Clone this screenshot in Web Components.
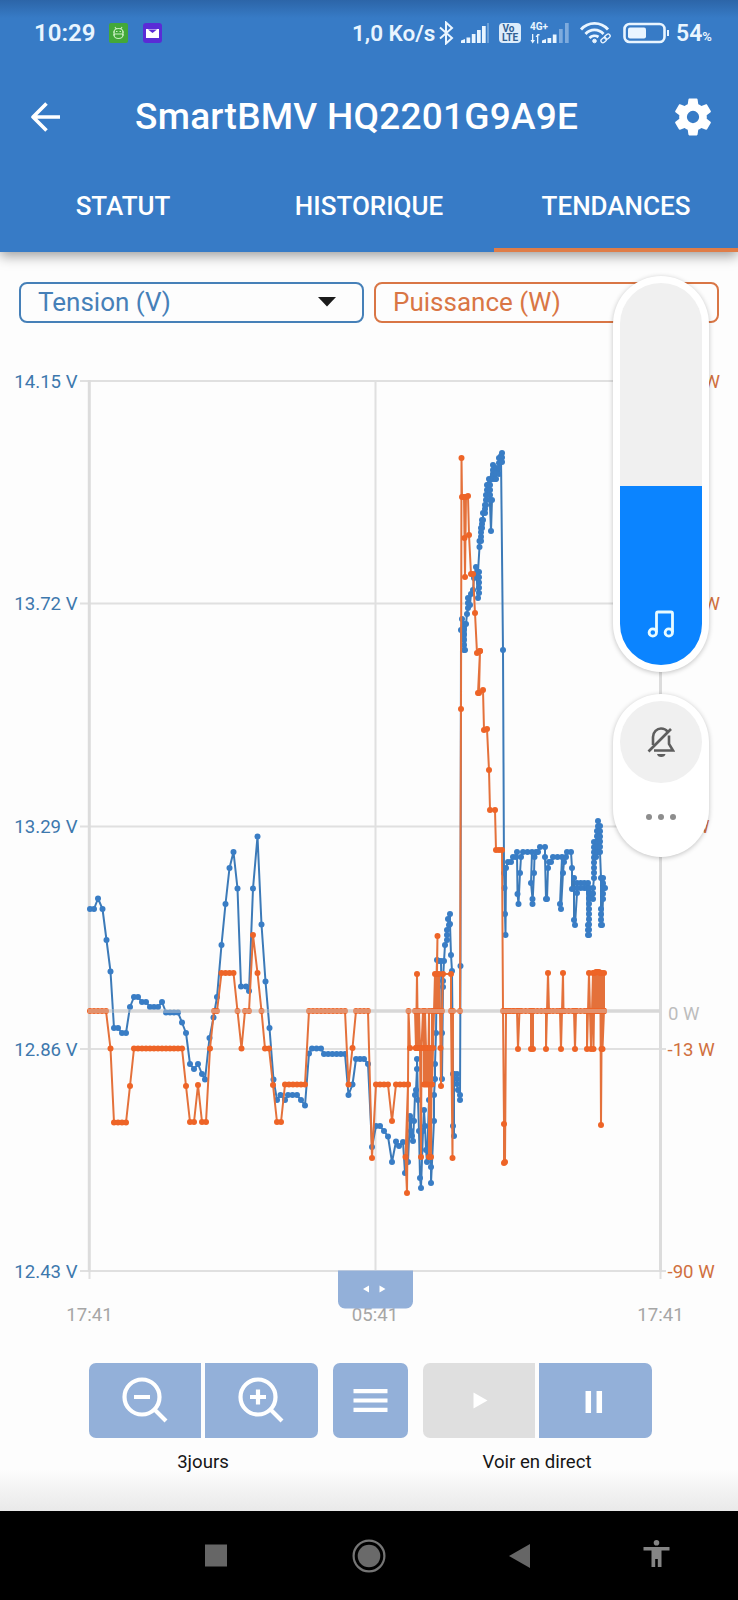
<!DOCTYPE html>
<html lang="fr">
<head>
<meta charset="utf-8">
<title>SmartBMV HQ2201G9A9E</title>
<style>
body {
    margin: 0;
    width: 738px;
    height: 1600px;
    overflow: hidden;
    background: #fdfdfd;
    font-family: Roboto, "Noto Sans", sans-serif;
}
</style>
</head>
<body>
<trends-app></trends-app>

<script>
class StatusBar extends HTMLElement {
    connectedCallback() {
        this.attachShadow({mode: 'open'}).innerHTML = `
        <style>
        :host {
            display: flex;
            align-items: center;
            height: 66px;
            padding: 0 26px 0 34px;
            color: #e9f5ff;
            font-size: 23px;
            font-weight: 500;
        }
        span { white-space: nowrap; }
        svg { display: block; flex: none; }
        .time { width: 75px; font-weight: 600; font-size: 24px; }
        .apps { display: flex; gap: 15px; }
        .right { display: flex; align-items: center; margin-left: auto; }
        .rate { width: 86px; font-size: 22.5px; font-weight: 600; }
        .level { width: 36px; margin-left: 6px; font-weight: 600; }
        small { font-size: 13px; }
        </style>
        <span class="time">10:29</span>
        <div class="apps">
            <svg width="19" height="20" viewBox="0 0 19 20"><rect width="19" height="20" rx="2" fill="#43a838"/><g fill="none" stroke="#c9efc0" stroke-width="1.100"><path d="M5 9a4.500 3.500 0 0 1 9 0v3a4.500 3.500 0 0 1-9 0zM4 9h2M13 9h2M4 12h2M13 12h2M5 11h9M6 4l1.200 2M13 4l-1.200 2"/><path d="M7 8.500h1.500M10.500 8.500H12"/></g></svg>
            <svg width="19" height="20" viewBox="0 0 19 20"><rect width="19" height="20" rx="3" fill="#5a2bd6"/><path d="M3 6h13v9H3z" fill="#fff"/><path d="M5 6.500h9L9.500 10z" fill="#5a2bd6"/></svg>
        </div>
        <div class="right">
            <span class="rate">1,0 Ko/s</span>
            <svg width="16" height="24" viewBox="0 0 16 24" fill="none" stroke="#e9f5ff" stroke-width="2"><path d="M2 6.500l12 10.500-6 5.500V1.500l6 5.500L2 17.500"/></svg>
            <svg width="28" height="22" viewBox="0 0 28 22" style="margin-left:7px" fill="#e9f5ff"><path d="M0 21v-2.500l4-1.500v4zM5.500 15.500h3.700V21H5.500zM10.800 12h3.700v9h-3.700zM16 8h3.700v13H16zM21 4h3.700v17H21z"/><path d="M26 1h2v20h-2z" opacity=".3"/></svg>
            <svg width="22" height="22" viewBox="0 0 22 22" style="margin-left:10px"><rect y="1" width="22" height="20" rx="4" fill="#dcecfb"/><g fill="#2f5f93" font-family="Roboto" font-weight="700" font-size="10"><text x="3.500" y="9.500">Vo</text><text x="3" y="19">LTE</text></g></svg>
            <svg width="40" height="24" viewBox="0 0 40 24" style="margin-left:9px" fill="#e9f5ff"><text y="9" font-family="Roboto" font-weight="700" font-size="10">4G+</text><path d="M2 13h1.300v6H5l-2.300 3.500L.5 19H2zM7 22.500V16H5.500L7.500 13l2 0v1.500H8.300v8z"/><path d="M12 22v-2.500l4-1.500v4zM17.500 17h3.700v5h-3.700zM22.800 13.500h3.700V22h-3.700z"/><path d="M29 8h3.700v14H29zM35 2h3.700v20H35z" opacity=".4"/></svg>
            <svg width="34" height="24" viewBox="0 0 34 24" style="margin-left:9px" fill="none" stroke="#e9f5ff" stroke-width="2.800"><path d="M2 8.500a18 18 0 0 1 27 0M6.500 13a12 12 0 0 1 18 0M10.500 17a7 7 0 0 1 9-1"/><circle cx="15.500" cy="20" r="1.800" fill="#e9f5ff" stroke-width="1"/><g stroke-width="1.300"><rect x="21.500" y="17.500" width="6" height="4" rx="2" transform="rotate(-40 24 19)"/><rect x="25.500" y="14" width="6" height="4" rx="2" transform="rotate(-40 28 16)"/></g></svg>
            <svg width="47" height="22" viewBox="0 0 47 22" style="margin-left:10px"><rect x="1.500" y="2" width="40" height="18" rx="5" fill="none" stroke="#e9f5ff" stroke-width="2.600"/><rect x="5" y="5.500" width="18" height="11" rx="2" fill="#e9f5ff"/><path d="M44 8h2v6h-2z" fill="#e9f5ff"/></svg>
            <span class="level">54<small>%</small></span>
        </div>
        `;
    }
}

class AppHeader extends HTMLElement {
    connectedCallback() {
        this.attachShadow({mode: 'open'}).innerHTML = `
        <style>
        :host {
            display: block;
            height: 252px;
            background: linear-gradient(#2c65a8, #377bc6 18px);
            box-shadow: 0 4px 12px rgba(0, 0, 0, .38);
            color: #fff;
        }
        .bar {
            display: flex;
            align-items: center;
            height: 101px;
            padding: 0 22px 0 31px;
        }
        h1 {
            flex: 1;
            margin: 0 0 0 73px;
            font-size: 37px;
            letter-spacing: .25px;
            font-weight: 500;
            white-space: nowrap;
        }
        .tabs {
            display: grid;
            grid-template-columns: repeat(3, 1fr);
            height: 85px;
        }
        </style>
        <status-bar></status-bar>
        <div class="bar">
            <svg width="31" height="32" viewBox="0 0 31 32" fill="none" stroke="#fff" stroke-width="3.600" stroke-linejoin="round"><path d="M29 16H3M15.500 2.500L2 16l13.500 13.500"/></svg>
            <h1><slot name="title"></slot></h1>
            <svg width="46" height="46" viewBox="0 0 24 24" fill="#fff"><path d="M19.140 12.940c.04-.3.060-.61.060-.94 0-.32-.02-.64-.07-.94l2.030-1.580c.18-.14.230-.41.120-.61l-1.920-3.320c-.12-.22-.37-.29-.59-.22l-2.390.96c-.5-.38-1.030-.7-1.620-.94l-.36-2.540c-.04-.24-.24-.41-.48-.41h-3.840c-.24 0-.43.170-.47.410l-.36 2.540c-.59.240-1.130.570-1.620.940l-2.390-.96c-.22-.08-.47 0-.59.220L2.740 8.870c-.12.210-.08.470.12.610l2.030 1.580c-.05.3-.09.630-.09.940s.02.640.070.940l-2.030 1.580c-.18.140-.23.410-.12.610l1.920 3.320c.12.220.37.290.59.220l2.390-.96c.5.380 1.030.7 1.620.940l.36 2.540c.05.240.24.410.48.410h3.840c.24 0 .44-.17.470-.41l.36-2.540c.59-.24 1.130-.56 1.620-.94l2.390.96c.22.080.47 0 .59-.22l1.920-3.320c.12-.22.070-.47-.12-.61l-2.010-1.580zM12 15.200A3.200 3.200 0 1 1 12 8.800a3.200 3.200 0 0 1 0 6.400z"/></svg>
        </div>
        <div class="tabs"><slot></slot></div>
        `;
    }
}

class TabItem extends HTMLElement {
    connectedCallback() {
        this.attachShadow({mode: 'open'}).innerHTML = `
        <style>
        :host {
            display: flex;
            justify-content: center;
            padding-top: 24px;
            font-size: 26px;
            line-height: 31px;
            font-weight: 500;
            border-bottom: 4px solid transparent;
        }
        :host([active]) {
            margin-left: 2px;
            border-color: #df7d48;
        }
        </style>
        <slot></slot>
        `;
    }
}

class SeriesSelect extends HTMLElement {
    connectedCallback() {
        this.attachShadow({mode: 'open'}).innerHTML = `
        <style>
        :host {
            display: flex;
            flex: 1;
            align-items: center;
            justify-content: space-between;
            box-sizing: border-box;
            height: 41px;
            padding: 0 26px 2px 17px;
            border: 2px solid currentColor;
            border-radius: 8px;
            font-size: 26px;
        }
        </style>
        <slot></slot>
        <svg width="18" height="10" viewBox="0 0 18 10"><path d="M0 0h18L9 9.500z" fill="#1b1b1b"/></svg>
        `;
    }
}

// "x,y" is one sample; "x1>x2,y" or "x,y1>y2" is a run of evenly spaced samples
const VOLTS = `90>94,909 98,898.5 102.5,909 106.5,940 110.5,971.5 114>118,1028 122>126,1033 130,1007 134>138,997
142>146,1002 150>158,1007 162,1002 166>178,1012.5 182,1022.5 186,1033 190,1064 194,1069 198,1064 202,1074 205,1079.5
209.5,1038 213.5,1017.5 217,997 221.5,945 225.5,904 229.5,868 233.5,852 237.5,888.5 241>246,986.5 249,991 253,888.5
257.5,836.5 261.5,924.5 265.5,981.5 269.5,1028 273.5,1079.5 277,1100 280.5,1095 285,1100 288>297,1095 301,1100
305,1105.5 309,1053.5 312>321,1048.5 324>345,1054 348.5,1095 352.5,1084.5 356>364,1059 368,1064 372,1147
376>380,1126 384,1131 388,1136.5 392,1162 396,1141.5 399,1146 403,1142 405,1173 408,1162 410,1116 411,1120 411,1131
412,1136 413,1141 414,1121 415,1095 416,1090 417,1069 417,1059 418,1100 419,1131 420,1178 421,1188 423,1131 424,1110
425,1126 426,1150 427,1162 429,1100 430,1157 431,1167 431,1183 434,1121 434,1095 435,1079 435,1064 436,1033 437,960
439,961 441,961 442,1033 442,1079 443,987 443,981 444,961 445,945 447,940>930 449,925 448,919 450,914 450,924
451,955 452,971 453,1074 453,1126 454,1136 454,1074 457,1074>1084 458,1090 460,1095>1100 460.5,966 461,630
462,619 464,650 464,624>645 465,650 466,624 467,614 468,608>598 470,605 471,594 473,590 474,578 476,567 478,598
479,593>572 478,572 479.5,547>541 481,541>528 482,528>520 483,520>513 485,513>505 486,505>495 487,495>485 488,485 489,479
491,531 492,500 490,500>480 493,465 493,479>470 495,479 496,479>468 499,474 499,468>458 502,462>453 501,456 503,650
504,873 504.5,888 505,914 505.5,935 506,868 508,862 511,862 513,857>858 516,857 517,852 517.5,894 518.5,904
520,873 521,857 523>532,852 531,883 532.5,899 532.5,904 534,873 534.5,857 536,852 538,852 540>545,847 545,857
546,899 547,899 548,868 549,862 551,862 553>562,857 560,904 561,909 563,873 564,862 566,857 567>571,852 572,868
572,889 574,878 574,920 575,925 577,893 577>588,883 588>577,888 587,888 588,925>935 589,935>888 590,893 593,899>888
594,878>842 596,857 597,831>852 598,821>852 600,826>852 601,878 601,909>925 602,925 603,899>878 605,888`;

const WATTS = `90>106,1011 110.5,1048.5 114>126,1122.5 130,1086 134>182,1048.5 186,1086 190>194,1122 198,1085 202>206,1122
210,1048.5 214>217,1011 221.5>233.5,973 237.5,1011 241.5,1048.5 245>249,1011 253,935 257.5,973 261.5,1011
265>269,1048.5 273,1085 277>281,1122 285>305,1084.5 309>345,1011 348.5,1084.5 352.5,1048 356>368,1011 372,1158
376>388,1084.5 392,1121 396>408,1084.5 405.5,1157 407,1193 408,1084.5 408.5,1011 410,1048 416,1048 417,974 418,1048
415,1011 416,1048 419,1011 420,1048 421,1157 421.5,1048 423,1011 424,1048 424,1084.5 425,1011 426,1048 426,1084.5
427,1048 428,1084.5 429,1011 429,1157 430,1048 431,1157 432,1011 432,1084.5 433,1048 434,1011 435,974 436,1011
437.5,936 437,974 438,1011 439,974 440,1011 440.5,1048 441,1086 442,1011 443,974 451,974 451,1011 452.5,1158
453,1011 460,1011 461,709 461.5,458 462>464,497 464.5,538 465,577 466,497 468,496 469,535 471,574 473,574 475,613
477,653 480,651 478,693 480,651 479,693 483,690 484,730 487,729 489,770 490,810 495,810 496>502,850 503,1011
504,1124 504,1163 505,1162 506,1011 509>517,1011 518,1049 519.5,1011 531,1011 531,1049 533,1049 533,1011
546,1011 546,1049 547,1011 548,973 549,1011 560,1011 561,1049 562,1011 563,973 563.5,1011 574,1011 575,1049
576,1011 587,1011 587,1049 588,1011 589,973 590,1011 591,1049 592,1011 593,973 593.5,1049 594,1011 594.5,973
595,1011 596,972 596.5,1011 597.5,972 598,1011 599,972 599,1011 600,973 600.5,1011 601,1125 601.5,1049 602,973
602.5,1049 604,1011 604,973 604,1011 506>604,1011`;

function readSeries(text) {
    const points = [];
    for (const token of text.trim().split(/\s+/)) {
        const [xs, ys] = token.split(',').map(part => part.split('>').map(Number));
        const dx = (xs[1] ?? xs[0]) - xs[0];
        const dy = (ys[1] ?? ys[0]) - ys[0];
        const steps = Math.round(Math.max(Math.abs(dx) / 4, Math.abs(dy) / 5));
        for (let i = 0; i <= steps; i++) {
            const t = steps ? i / steps : 0;
            points.push([xs[0] + dx * t, ys[0] + dy * t]);
        }
    }
    return points;
}

class TrendChart extends HTMLElement {
    connectedCallback() {
        this.attachShadow({mode: 'open'});
        this.render();
    }

    series(text, name) {
        const points = readSeries(text);
        return `<g class="${name}">
            <polyline points="${points.map(p => p.join()).join(' ')}"/>
            ${points.map(([x, y]) => `<circle cx="${x}" cy="${y}" r="3"/>`).join('')}
        </g>`;
    }

    render() {
        const rows = [381, 603.5, 826.5, 1049, 1271];
        const left = ['14.15 V', '13.72 V', '13.29 V', '12.86 V', '12.43 V'];
        const right = ['218 W', '141 W', '64 W', '-13 W', '-90 W'];
        this.shadowRoot.innerHTML = `
        <style>
        :host { display: block; height: 1000px; }
        svg { display: block; }
        text { font-size: 18.6px; }
        .grid { stroke: #e0e0e0; stroke-width: 2; fill: none; }
        .axis { stroke: #dcdcdc; stroke-width: 3; }
        .zero { stroke: rgba(210, 210, 210, .42); stroke-width: 4; }
        .v { fill: #3d78ad; text-anchor: end; }
        .w { fill: #d0703f; }
        .t { fill: #a6a6a6; text-anchor: middle; }
        polyline { fill: none; stroke-width: 2; stroke-linejoin: round; }
        .volts polyline { stroke: #3c7ab8; }
        .volts circle { fill: #397dc5; }
        .watts polyline { stroke: #e4713b; }
        .watts circle { fill: #ee6427; }
        </style>
        <svg width="738" height="1000" viewBox="0 335 738 1000">
            <g class="grid">
                ${rows.map(y => `<path d="M80 ${y}H666"/>`).join('')}
                <path d="M375.500 381V1271M89.500 1271v8M660.500 1271v8"/>
                <path class="axis" d="M89.300 380V1272M660.500 380V1272M88 1011H660"/>
            </g>
            ${rows.map((y, i) => `<text class="v" x="77.5" y="${y + 6.5}">${left[i]}</text>
            <text class="w" x="667.5" y="${y + 6.5}">${right[i]}</text>`).join('')}
            <text x="668" y="1019.5" fill="#bdbdbd">0 W</text>
            ${this.series(VOLTS, 'volts')}
            ${this.series(WATTS, 'watts')}
            <path class="zero" d="M88 1011H660"/>
            <text class="t" x="89.5" y="1321">17:41</text>
            <text class="t" x="375" y="1321">05:41</text>
            <text class="t" x="660.5" y="1321">17:41</text>
            <path d="M338 1270.500h75v31a7 7 0 0 1-7 7h-61a7 7 0 0 1-7-7z" fill="#93b0d9"/>
            <path d="M369 1285.500v7l-6-3.500zM379.500 1285.500v7l6-3.500z" fill="#fff"/>
        </svg>
        `;
    }
}

class ControlButton extends HTMLElement {
    connectedCallback() {
        const icons = {
            'zoom-out': '<circle cx="53" cy="34" r="17.500"/><path d="M45 34h16M65.500 46.500L77 58"/>',
            'zoom-in': '<circle cx="53" cy="34" r="17.500"/><path d="M45 34h16M53 26.500v15M65.500 46.500L77 58"/>',
            'menu': '<path d="M20.500 28.200h34M20.500 37.500h34M20.500 46.800h34"/>',
            'play': '<path d="M50.500 29.500v16L64.500 37.500z" fill="#fff" stroke="none"/>',
            'pause': '<path d="M49.300 28v22M60.300 28v22" stroke-width="5.500"/>'
        };
        const width = this.getAttribute('icon') === 'menu' ? 75 : 112.5;
        this.attachShadow({mode: 'open'}).innerHTML = `
        <style>
        :host {
            display: block;
            width: ${width}px;
            height: 75px;
            background: #93b0d9;
            border-radius: 7px;
        }
        :host([side="left"]) { border-radius: 7px 0 0 7px; }
        :host([side="right"]) { border-radius: 0 7px 7px 0; }
        :host([disabled]) { background: #dfdfdf; }
        svg { display: block; }
        </style>
        <svg width="${width}" height="75" fill="none" stroke="#fff" stroke-width="4.200">${icons[this.getAttribute('icon')]}</svg>
        `;
    }
}

class ChartControls extends HTMLElement {
    connectedCallback() {
        this.attachShadow({mode: 'open'}).innerHTML = `
        <style>
        :host {
            display: flex;
            justify-content: center;
            gap: 15px;
            box-sizing: border-box;
            height: 176px;
            padding: 28px 0 0 2px;
            background: linear-gradient(transparent 134px, #e9e9e9);
        }
        .pair { display: flex; gap: 4px; }
        p {
            margin: 12px 0 0;
            font-size: 18.6px;
            line-height: 24px;
            text-align: center;
            color: #161616;
        }
        </style>
        <div>
            <div class="pair">
                <control-button icon="zoom-out" side="left"></control-button>
                <control-button icon="zoom-in" side="right"></control-button>
            </div>
            <p>3jours</p>
        </div>
        <control-button icon="menu"></control-button>
        <div>
            <div class="pair">
                <control-button icon="play" side="left" disabled></control-button>
                <control-button icon="pause" side="right"></control-button>
            </div>
            <p>Voir en direct</p>
        </div>
        `;
    }
}

class VolumePanel extends HTMLElement {
    connectedCallback() {
        this.attachShadow({mode: 'open'}).innerHTML = `
        <style>
        :host {
            position: absolute;
            top: 276px;
            left: 613px;
            display: flex;
            flex-direction: column;
            gap: 22px;
            width: 96px;
        }
        .card {
            box-sizing: border-box;
            padding: 7px;
            border-radius: 48px;
            background: #fff;
            box-shadow: 0 1px 5px rgba(0, 0, 0, .24);
        }
        .slider { height: 396px; }
        .track {
            display: flex;
            align-items: flex-end;
            height: 382px;
            border-radius: 41px;
            overflow: hidden;
            background: #f0f0f0;
        }
        .level {
            display: flex;
            justify-content: center;
            align-items: flex-end;
            box-sizing: border-box;
            width: 100%;
            height: 179px;
            padding-bottom: 27px;
            background: #0b84ff;
        }
        .mode {
            display: flex;
            flex-direction: column;
            align-items: center;
            height: 163px;
        }
        .bell {
            display: flex;
            justify-content: center;
            align-items: center;
            width: 82px;
            height: 82px;
            border-radius: 50%;
            background: #f0f0f0;
        }
        .dots { margin-top: 31px; }
        svg { display: block; }
        </style>
        <div class="card slider">
            <div class="track"><div class="level">
                <svg width="28" height="28" viewBox="0 0 28 28" fill="none" stroke="#e8fbff" stroke-width="2.800"><path d="M9.500 22V3.500a1.500 1.500 0 0 1 1.500-1.500h13a1.500 1.500 0 0 1 1.500 1.500V22"/><circle cx="5.800" cy="22.500" r="3.700"/><circle cx="21.800" cy="22.500" r="3.700"/></svg>
            </div></div>
        </div>
        <div class="card mode">
            <div class="bell">
                <svg width="28" height="32" viewBox="0 0 28 32" fill="none" stroke="#5e5e5e" stroke-width="2.600"><path d="M6 19v-8c0-5 4-8.500 8-8.500 2.500 0 5 1 6.500 3M22 9.500V18l4 6.500H7"/><path d="M1.500 25.500L24 3"/><path d="M10 28h8.500a4.300 3.500 0 0 1-8.500 0z" fill="#5e5e5e" stroke="none"/></svg>
            </div>
            <svg class="dots" width="30" height="6" fill="#8d8d8d"><circle cx="3" cy="3" r="3"/><circle cx="15" cy="3" r="3"/><circle cx="27" cy="3" r="3"/></svg>
        </div>
        `;
    }
}

class NavBar extends HTMLElement {
    connectedCallback() {
        this.attachShadow({mode: 'open'}).innerHTML = `
        <style>
        :host {
            display: flex;
            align-items: center;
            box-sizing: border-box;
            height: 89px;
            padding-left: 200px;
            background: #000;
        }
        svg { display: block; }
        .home { margin-left: 118px; }
        .back { margin-left: 117px; }
        .access { margin-left: 102px; }
        </style>
        <svg width="34" height="34" fill="#666"><path d="M5 5.500h22v22H5z"/></svg>
        <svg class="home" width="34" height="34"><circle cx="17" cy="17" r="15.400" fill="none" stroke="#757575" stroke-width="2.200"/><circle cx="17" cy="17" r="11.300" fill="#6a6a6a"/></svg>
        <svg class="back" width="34" height="34" fill="#666"><path d="M27 5v24L6 17z"/></svg>
        <svg class="access" width="34" height="34" fill="#858585"><circle cx="17.500" cy="3.800" r="2.800"/><path d="M4.500 8h26v3.500H22.500V28H18.800v-8h-2.600v8H12.500V11.500H4.500z"/></svg>
        `;
    }
}

class TrendsApp extends HTMLElement {
    connectedCallback() {
        this.attachShadow({mode: 'open'}).innerHTML = `
        <style>
        :host {
            position: relative;
            display: flex;
            flex-direction: column;
            height: 1600px;
        }
        .selects {
            display: flex;
            gap: 10px;
            padding: 30px 19px 12px;
        }
        .volts { color: #4680b8; }
        .watts { color: #d97645; }
        </style>
        <app-header>
            <span slot="title">SmartBMV HQ2201G9A9E</span>
            <tab-item>STATUT</tab-item>
            <tab-item>HISTORIQUE</tab-item>
            <tab-item active>TENDANCES</tab-item>
        </app-header>
        <div class="selects">
            <series-select class="volts">Tension (V)</series-select>
            <series-select class="watts">Puissance (W)</series-select>
        </div>
        <trend-chart></trend-chart>
        <chart-controls></chart-controls>
        <nav-bar></nav-bar>
        <volume-panel></volume-panel>
        `;
    }
}

window.customElements.define('status-bar', StatusBar);
window.customElements.define('app-header', AppHeader);
window.customElements.define('tab-item', TabItem);
window.customElements.define('series-select', SeriesSelect);
window.customElements.define('trend-chart', TrendChart);
window.customElements.define('control-button', ControlButton);
window.customElements.define('chart-controls', ChartControls);
window.customElements.define('volume-panel', VolumePanel);
window.customElements.define('nav-bar', NavBar);
window.customElements.define('trends-app', TrendsApp);
</script>
</body>
</html>
